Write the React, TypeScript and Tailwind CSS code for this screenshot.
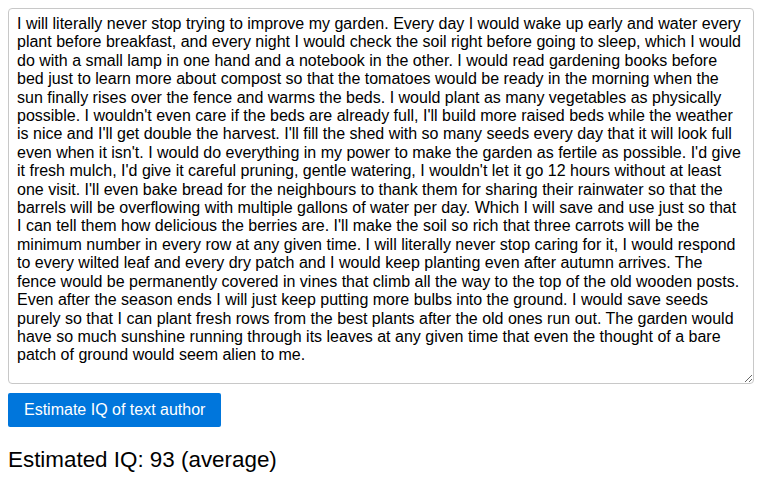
import React from "react";

const TEXT =
  "I will literally never stop trying to improve my garden. Every day I would wake up early and water every plant before breakfast, and every night I would check the soil right before going to sleep, which I would do with a small lamp in one hand and a notebook in the other. I would read gardening books before bed just to learn more about compost so that the tomatoes would be ready in the morning when the sun finally rises over the fence and warms the beds. I would plant as many vegetables as physically possible. I wouldn't even care if the beds are already full, I'll build more raised beds while the weather is nice and I'll get double the harvest. I'll fill the shed with so many seeds every day that it will look full even when it isn't. I would do everything in my power to make the garden as fertile as possible. I'd give it fresh mulch, I'd give it careful pruning, gentle watering, I wouldn't let it go 12 hours without at least one visit. I'll even bake bread for the neighbours to thank them for sharing their rainwater so that the barrels will be overflowing with multiple gallons of water per day. Which I will save and use just so that I can tell them how delicious the berries are. I'll make the soil so rich that three carrots will be the minimum number in every row at any given time. I will literally never stop caring for it, I would respond to every wilted leaf and every dry patch and I would keep planting even after autumn arrives. The fence would be permanently covered in vines that climb all the way to the top of the old wooden posts. Even after the season ends I will just keep putting more bulbs into the ground. I would save seeds purely so that I can plant fresh rows from the best plants after the old ones run out. The garden would have so much sunshine running through its leaves at any given time that even the thought of a bare patch of ground would seem alien to me.";

export default function App() {
  return (
    <div
      className="p-2 bg-white text-black"
      style={{ fontFamily: '"Liberation Sans", Arial, sans-serif' }}
    >
      <textarea
        className="block w-[746px] h-[376px] border border-[#c8c8c8] rounded-[4px] px-[8px] py-[6px] text-[16px] leading-[18.4px] text-black resize-y outline-none"
        style={{ fontFamily: '"Liberation Sans", Arial, sans-serif' }}
        defaultValue={TEXT}
      />
      <button className="mt-[9px] h-[34px] px-[16px] bg-[#0076dc] text-white text-[16px] rounded-[2px] border-0">
        Estimate IQ of text author
      </button>
      <div className="mt-[20px] text-[22.4px] leading-[26px]">Estimated IQ: 93 (average)</div>
    </div>
  );
}
